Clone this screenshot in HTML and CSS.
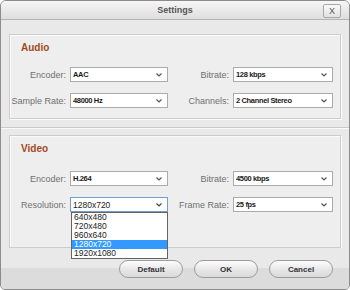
FILE: index.html
```html
<!DOCTYPE html>
<html lang="en">

<head>
  <meta charset="UTF-8">
  <meta name="viewport" content="width=device-width, initial-scale=1.0">

  <title>Settings</title>
  <link rel="stylesheet" href="styles.css">
</head>

<body>
  <div class="window">
    <div class="titlebar">
      <span></span>
      <span class="title">Settings</span>
      <span class="close">X</span>
    </div>

    <div class="section audio">
      <div class="group">
        <h2>Audio</h2>
        <div class="fields">
          <label>Encoder:</label>
          <div class="select"><span>AAC</span><svg width="6" height="4" viewBox="0 0 6 4"><path d="M0.5 0.5 L3 3 L5.5 0.5" fill="none" stroke="#555" stroke-width="1.2"/></svg></div>
          <label>Bitrate:</label>
          <div class="select"><span>128 kbps</span><svg width="6" height="4" viewBox="0 0 6 4"><path d="M0.5 0.5 L3 3 L5.5 0.5" fill="none" stroke="#555" stroke-width="1.2"/></svg></div>
          <label>Sample Rate:</label>
          <div class="select"><span>48000 Hz</span><svg width="6" height="4" viewBox="0 0 6 4"><path d="M0.5 0.5 L3 3 L5.5 0.5" fill="none" stroke="#555" stroke-width="1.2"/></svg></div>
          <label>Channels:</label>
          <div class="select"><span>2 Channel Stereo</span><svg width="6" height="4" viewBox="0 0 6 4"><path d="M0.5 0.5 L3 3 L5.5 0.5" fill="none" stroke="#555" stroke-width="1.2"/></svg></div>
        </div>
      </div>
    </div>

    <div class="section video">
      <div class="group">
        <h2>Video</h2>
        <div class="fields">
          <label>Encoder:</label>
          <div class="select"><span>H.264</span><svg width="6" height="4" viewBox="0 0 6 4"><path d="M0.5 0.5 L3 3 L5.5 0.5" fill="none" stroke="#555" stroke-width="1.2"/></svg></div>
          <label>Bitrate:</label>
          <div class="select"><span>4500 kbps</span><svg width="6" height="4" viewBox="0 0 6 4"><path d="M0.5 0.5 L3 3 L5.5 0.5" fill="none" stroke="#555" stroke-width="1.2"/></svg></div>
          <label>Resolution:</label>
          <div class="select open"><span>1280x720</span><svg width="6" height="4" viewBox="0 0 6 4"><path d="M0.5 0.5 L3 3 L5.5 0.5" fill="none" stroke="#444" stroke-width="1.2"/></svg>
            <ul class="dropdown">
              <li>640x480</li>
              <li>720x480</li>
              <li>960x640</li>
              <li class="selected">1280x720</li>
              <li>1920x1080</li>
            </ul>
          </div>
          <label>Frame Rate:</label>
          <div class="select"><span>25 fps</span><svg width="6" height="4" viewBox="0 0 6 4"><path d="M0.5 0.5 L3 3 L5.5 0.5" fill="none" stroke="#555" stroke-width="1.2"/></svg></div>
        </div>
      </div>
    </div>

    <div class="buttons">
      <button>Default</button>
      <button>OK</button>
      <button>Cancel</button>
    </div>
  </div>
</body>

</html>
```

FILE: styles.css
```css
body {
  margin: 0;
  font-family: "Liberation Sans", Arial, sans-serif;
  background: #fff;
}

.window {
  width: 350px;
  height: 290px;
  box-sizing: border-box;
  border: 1px solid #8c8c8c;
  border-radius: 6px 6px 5px 5px;
  background: #e9e9e9;
  overflow: hidden;
  display: flex;
  flex-direction: column;
}

.titlebar {
  height: 18px;
  display: grid;
  grid-template-columns: 1fr auto 1fr;
  align-items: center;
  background: linear-gradient(#f6f6f6, #dedede);
  border-bottom: 1px solid #b4b4b4;
}

.title {
  font-size: 9px;
  font-weight: bold;
  color: #555;
}

.close {
  justify-self: end;
  margin-right: 8px;
  margin-top: 1px;
  width: 16px;
  height: 12px;
  line-height: 12px;
  text-align: center;
  font-size: 9px;
  color: #555;
  border: 1px solid #a8a8a8;
  border-radius: 2px;
  background: linear-gradient(#fafafa, #e2e2e2);
}

.section {
  padding: 0 8px;
}

.audio {
  padding-top: 14px;
  padding-bottom: 8px;
  border-bottom: 1px solid #cacaca;
}

.video {
  padding-top: 6px;
  border-top: 1px solid #fafafa;
}

.group {
  border: 1px solid #cdcdcd;
  box-shadow: inset 1px 1px 0 #fafafa, 1px 1px 0 #fafafa;
  background: #eeeeee;
  padding: 6px 8px 10px 0;
}

.video .group {
  padding-bottom: 35px;
}

h2 {
  margin: 0 0 0 11px;
  font-size: 10px;
  line-height: 13px;
  color: #a44a1e;
}

.fields {
  margin-top: 13px;
  display: grid;
  grid-template-columns: 60px 98px 65px 100px;
  grid-auto-rows: 15px;
  row-gap: 11px;
  align-items: center;
}

.video .fields {
  margin-top: 16px;
}

label {
  font-size: 9px;
  color: #707070;
  text-align: right;
  padding-right: 4px;
  white-space: nowrap;
}

.select {
  position: relative;
  height: 15px;
  box-sizing: border-box;
  border: 1px solid #ababab;
  background: #fff;
  display: flex;
  align-items: center;
  justify-content: space-between;
  padding: 0 5px 0 2px;
  font-size: 7.5px;
  font-weight: bold;
  letter-spacing: -0.35px;
  color: #1a1a1a;
}

.select.open {
  border-color: #6f9fd0;
  font-size: 8.5px;
  font-weight: normal;
  letter-spacing: 0;
  color: #222;
}

.dropdown {
  position: absolute;
  top: 14px;
  left: 0;
  right: -1px;
  margin: 0;
  padding: 0;
  list-style: none;
  background: #fff;
  border: 1px solid #646464;
  z-index: 2;
}

.dropdown li {
  height: 9px;
  line-height: 9px;
  padding-left: 2px;
  font-size: 8.5px;
  color: #222;
}

.dropdown li.selected {
  background: #3399ff;
  color: #fff;
}

.buttons {
  flex: 1;
  display: flex;
  justify-content: flex-end;
  align-items: flex-start;
  gap: 11px;
  padding: 12px 16px 0 0;
  background: linear-gradient(#e9e9e9 0 20px, #dcdcdc 20px);
}

button {
  width: 64px;
  height: 18px;
  border: 1px solid #9c9c9c;
  border-radius: 9px;
  background: linear-gradient(#fdfdfd, #e4e4e4 60%, #dadada);
  font-family: "Liberation Sans", Arial, sans-serif;
  font-size: 8px;
  font-weight: bold;
  color: #333;
  padding: 0;
}
```
